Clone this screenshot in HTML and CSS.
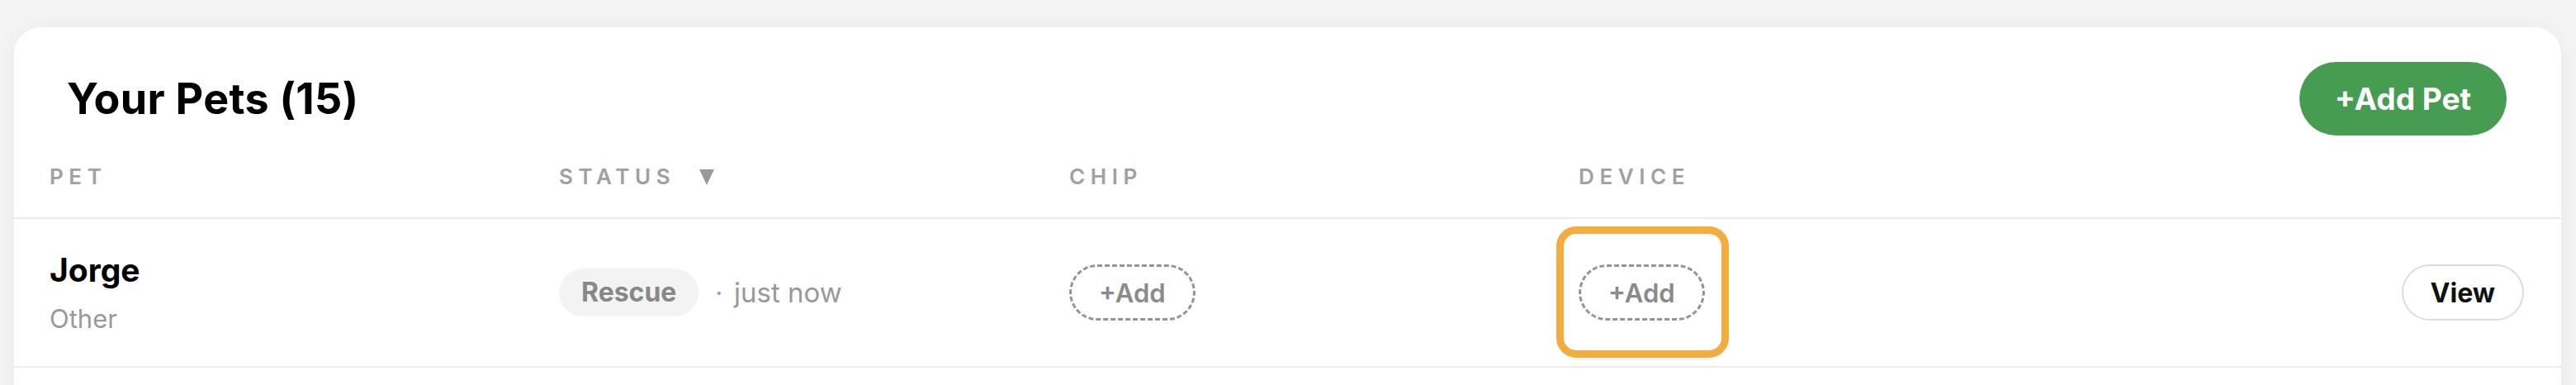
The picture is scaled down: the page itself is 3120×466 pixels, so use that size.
FILE: index.html
```html
<!DOCTYPE html>
<html lang="en">
<head>
    <meta charset="UTF-8">
    <meta name="viewport" content="width=device-width, initial-scale=1.0">
    <title>Your Pets</title>
    <link rel="stylesheet" href="styles.css">
</head>
<body>
    <div class="card">
        <div class="card-head">
            <h1 class="title">Your Pets (15)</h1>
            <button class="add-pet">+Add Pet</button>
        </div>

        <div class="table">
            <div class="row head">
                <div class="th">PET</div>
                <div class="th">STATUS
                    <svg class="sort" viewBox="0 0 18 19" width="18" height="19"><polygon points="0,0 18,0 9,19" /></svg>
                </div>
                <div class="th">CHIP</div>
                <div class="th">DEVICE</div>
                <div class="th"></div>
            </div>

            <div class="row">
                <div class="pet">
                    <div class="pet-name">Jorge</div>
                    <div class="pet-type">Other</div>
                </div>
                <div class="status">
                    <span class="badge">Rescue</span>
                    <span class="dot">·</span>
                    <span class="when">just now</span>
                </div>
                <div>
                    <button class="add-btn">+Add</button>
                </div>
                <div>
                    <button class="add-btn highlight">+Add</button>
                </div>
                <div>
                    <button class="view-btn">View</button>
                </div>
            </div>
        </div>
    </div>
</body>
</html>
```

FILE: styles.css
```css
body {
    margin: 0;
    height: 466px;
    overflow: hidden;
    background: #f4f4f4;
    font-family: Inter, "Liberation Sans", sans-serif;
    color: #000;
}

.card {
    margin: 33px 18px 0 17px;
    background: #fff;
    border-radius: 32px;
    box-shadow: 0 2px 30px rgba(0, 0, 0, 0.05);
    padding-bottom: 80px;
}

.card-head {
    display: flex;
    justify-content: space-between;
    align-items: center;
    padding: 42px 66px 0 64px;
}

.title {
    margin: 0;
    font-size: 52px;
    font-weight: 700;
    letter-spacing: 0.3px;
}

.add-pet {
    height: 89px;
    padding: 0 43px;
    border: none;
    border-radius: 45px;
    background: #469c51;
    color: #fff;
    font-family: inherit;
    font-size: 37px;
    font-weight: 700;
}

.row {
    display: grid;
    grid-template-columns: 617px 618px 617px 1fr auto;
    align-items: center;
    padding: 0 45px 0 43px;
    border-bottom: 2px solid #ebebeb;
}

.row.head {
    margin-top: 34px;
    padding-top: 0;
    padding-bottom: 33px;
}

.th {
    display: flex;
    align-items: center;
    gap: 29px;
    font-size: 26px;
    line-height: 32px;
    font-weight: 600;
    letter-spacing: 6.6px;
    color: #a0a0a0;
}

.sort {
    fill: #999;
}

.row:not(.head) {
    height: 178px;
}

.pet-name {
    font-size: 39px;
    line-height: 48px;
    font-weight: 700;
}

.pet-type {
    margin-top: 16px;
    font-size: 31px;
    line-height: 38px;
    color: #999;
}

.status {
    display: flex;
    align-items: center;
}

.badge {
    height: 58px;
    line-height: 58px;
    padding: 0 27px;
    border-radius: 29px;
    background: #f3f3f3;
    color: #888;
    font-size: 32px;
    font-weight: 700;
}

.dot {
    margin: 0 14px 0 20px;
    color: #999;
    font-size: 30px;
}

.when {
    color: #999;
    font-size: 33px;
}

.add-btn {
    position: relative;
    height: 68px;
    padding: 0 33px;
    border: 3px dashed #949494;
    border-radius: 34px;
    background: #fff;
    color: #8a8a8a;
    font-family: inherit;
    font-size: 31px;
    font-weight: 600;
}

/* orange callout ring round the device button */
.add-btn.highlight::after {
    content: "";
    position: absolute;
    top: -49px;
    bottom: -48px;
    left: -30px;
    right: -32px;
    border: 9px solid #f3ad3e;
    border-radius: 24px;
}

.view-btn {
    height: 68px;
    padding: 0 33px;
    border: 2px solid #dcdcdc;
    border-radius: 34px;
    background: #fff;
    color: #111;
    font-family: inherit;
    font-size: 32px;
    font-weight: 700;
}
```
